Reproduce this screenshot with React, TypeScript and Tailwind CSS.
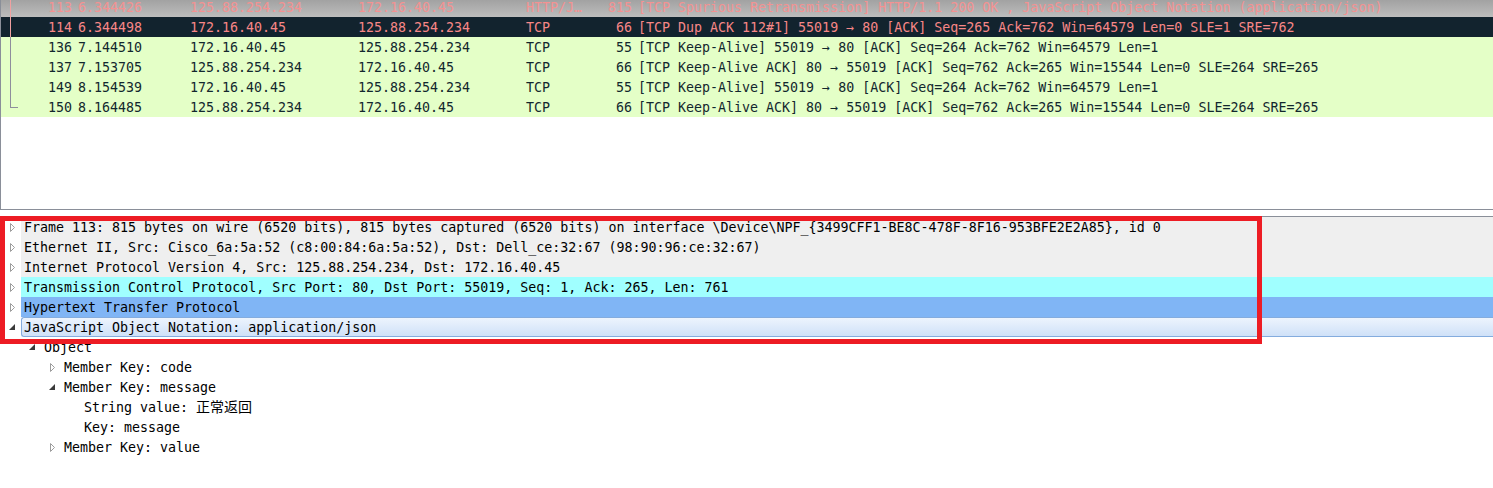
import React from 'react';

type Packet = {
  no: string;
  time: string;
  src: string;
  dst: string;
  proto: string;
  len: string;
  info: string;
};

const packets: Packet[] = [
  { no: '114', time: '6.344498', src: '172.16.40.45', dst: '125.88.254.234', proto: 'TCP', len: '66', info: '[TCP Dup ACK 112#1] 55019 → 80 [ACK] Seq=265 Ack=762 Win=64579 Len=0 SLE=1 SRE=762' },
  { no: '136', time: '7.144510', src: '172.16.40.45', dst: '125.88.254.234', proto: 'TCP', len: '55', info: '[TCP Keep-Alive] 55019 → 80 [ACK] Seq=264 Ack=762 Win=64579 Len=1' },
  { no: '137', time: '7.153705', src: '125.88.254.234', dst: '172.16.40.45', proto: 'TCP', len: '66', info: '[TCP Keep-Alive ACK] 80 → 55019 [ACK] Seq=762 Ack=265 Win=15544 Len=0 SLE=264 SRE=265' },
  { no: '149', time: '8.154539', src: '172.16.40.45', dst: '125.88.254.234', proto: 'TCP', len: '55', info: '[TCP Keep-Alive] 55019 → 80 [ACK] Seq=264 Ack=762 Win=64579 Len=1' },
  { no: '150', time: '8.164485', src: '125.88.254.234', dst: '172.16.40.45', proto: 'TCP', len: '66', info: '[TCP Keep-Alive ACK] 80 → 55019 [ACK] Seq=762 Ack=265 Win=15544 Len=0 SLE=264 SRE=265' },
];

const first: Packet = {
  no: '113',
  time: '6.344426',
  src: '125.88.254.234',
  dst: '172.16.40.45',
  proto: 'HTTP/J…',
  len: '815',
  info: '[TCP Spurious Retransmission] HTTP/1.1 200 OK , JavaScript Object Notation (application/json)',
};

const Cells: React.FC<{ p: Packet; line: string; last?: boolean }> = ({ p, line, last }) => (
  <>
    <div className="w-[19px] h-[20px] shrink-0 pl-[9px]">
      {last ? (
        <div className={`h-[11px] w-[8px] border-l border-b ${line}`} />
      ) : (
        <div className={`h-full border-l ${line}`} />
      )}
    </div>
    <div className="w-[52px] shrink-0 text-right">{p.no}</div>
    <div className="w-[118px] shrink-0 pl-[6px]">{p.time}</div>
    <div className="w-[168px] shrink-0">{p.src}</div>
    <div className="w-[168px] shrink-0">{p.dst}</div>
    <div className="w-[80px] shrink-0">{p.proto}</div>
    <div className="w-[26px] shrink-0 text-right">{p.len}</div>
    <div className="pl-[6px] whitespace-nowrap">{p.info}</div>
  </>
);

const Closed = () => (
  <svg width="6" height="9" viewBox="0 0 6 9">
    <polygon points="0.5,0.5 0.5,8.5 4.5,4.5" fill="#ffffff" stroke="#9c9c9c" strokeWidth="1" />
  </svg>
);

const Open = () => (
  <svg width="7" height="7" viewBox="0 0 7 7">
    <polygon points="6,0 6,6 0,6" fill="#3a3a3a" />
  </svg>
);

const indent: Record<number, string> = {
  0: 'pl-0',
  1: 'pl-[20px]',
  2: 'pl-[40px]',
  3: 'pl-[60px]',
};

const TreeRow: React.FC<{
  level: number;
  state?: 'closed' | 'open';
  bg?: string;
  children: React.ReactNode;
}> = ({ level, state, bg = '', children }) => (
  <div className={`flex h-[20px] items-stretch ${indent[level]}`}>
    <div className={`w-[21px] shrink-0 flex items-center ${state === 'open' ? 'pl-[9px]' : 'pl-[10px]'}`}>
      {state === 'closed' && <Closed />}
      {state === 'open' && <Open />}
    </div>
    <div className={`flex-1 pl-[3px] whitespace-nowrap ${bg}`}>{children}</div>
  </div>
);

export default function App() {
  return (
    <div className="w-[1493px] h-[488px] overflow-hidden bg-white flex flex-col font-['DejaVu_Sans_Mono','Noto_Sans_CJK_SC',monospace] text-[13.3px] leading-[22px]">
      {/* packet list */}
      <div className="h-[210px] shrink-0 border-l border-b border-[#8a8f99] flex flex-col">
        <div className="h-[17px] overflow-hidden flex flex-col justify-end bg-gradient-to-b from-[#a2a2a2] to-[#bdbdbd] text-[#f39292]">
          <div className="h-[20px] flex shrink-0 items-start">
            <Cells p={first} line="border-[#f0a0a0]" />
          </div>
        </div>
        {packets.map((p, i) => (
          <div
            key={p.no}
            className={`h-[20px] flex items-start ${i === 0 ? 'bg-[#12232e] text-[#f78787]' : 'bg-[#e4ffc7] text-[#12272e]'}`}
          >
            <Cells
              p={p}
              line={i === 0 ? 'border-[#f0a0a0]' : 'border-[#8e8e9c]'}
              last={i === packets.length - 1}
            />
          </div>
        ))}
      </div>

      <div className="h-[6px] shrink-0" />

      {/* packet details */}
      <div className="relative flex-1 border-t border-[#8a8f99] text-black">
        <TreeRow level={0} state="closed" bg="bg-[#efefef]">
          Frame 113: 815 bytes on wire (6520 bits), 815 bytes captured (6520 bits) on interface \Device\NPF_{'{'}3499CFF1-BE8C-478F-8F16-953BFE2E2A85{'}'}, id 0
        </TreeRow>
        <TreeRow level={0} state="closed" bg="bg-[#efefef]">
          Ethernet II, Src: Cisco_6a:5a:52 (c8:00:84:6a:5a:52), Dst: Dell_ce:32:67 (98:90:96:ce:32:67)
        </TreeRow>
        <TreeRow level={0} state="closed" bg="bg-[#efefef]">
          Internet Protocol Version 4, Src: 125.88.254.234, Dst: 172.16.40.45
        </TreeRow>
        <TreeRow level={0} state="closed" bg="bg-[#a0ffff]">
          Transmission Control Protocol, Src Port: 80, Dst Port: 55019, Seq: 1, Ack: 265, Len: 761
        </TreeRow>
        <TreeRow level={0} state="closed" bg="bg-[#80b5f5]">
          Hypertext Transfer Protocol
        </TreeRow>
        <TreeRow
          level={0}
          state="open"
          bg="border border-r-0 border-[#84acde] rounded-l-[3px] bg-gradient-to-b from-[#edf4fd] to-[#cfe1f8] !pl-[2px] leading-[20px]"
        >
          JavaScript Object Notation: application/json
        </TreeRow>
        <TreeRow level={1} state="open">Object</TreeRow>
        <TreeRow level={2} state="closed">Member Key: code</TreeRow>
        <TreeRow level={2} state="open">Member Key: message</TreeRow>
        <TreeRow level={3}>
          String value: <span className="text-[14px] leading-none font-['Noto_Sans_CJK_SC',sans-serif]">正常返回</span>
        </TreeRow>
        <TreeRow level={3}>Key: message</TreeRow>
        <TreeRow level={2} state="closed">Member Key: value</TreeRow>

        {/* annotation box */}
        <div className="absolute left-0 -top-px w-[1262px] h-[128px] border-[5px] border-[#ed1c24] pointer-events-none" />
      </div>
    </div>
  );
}
